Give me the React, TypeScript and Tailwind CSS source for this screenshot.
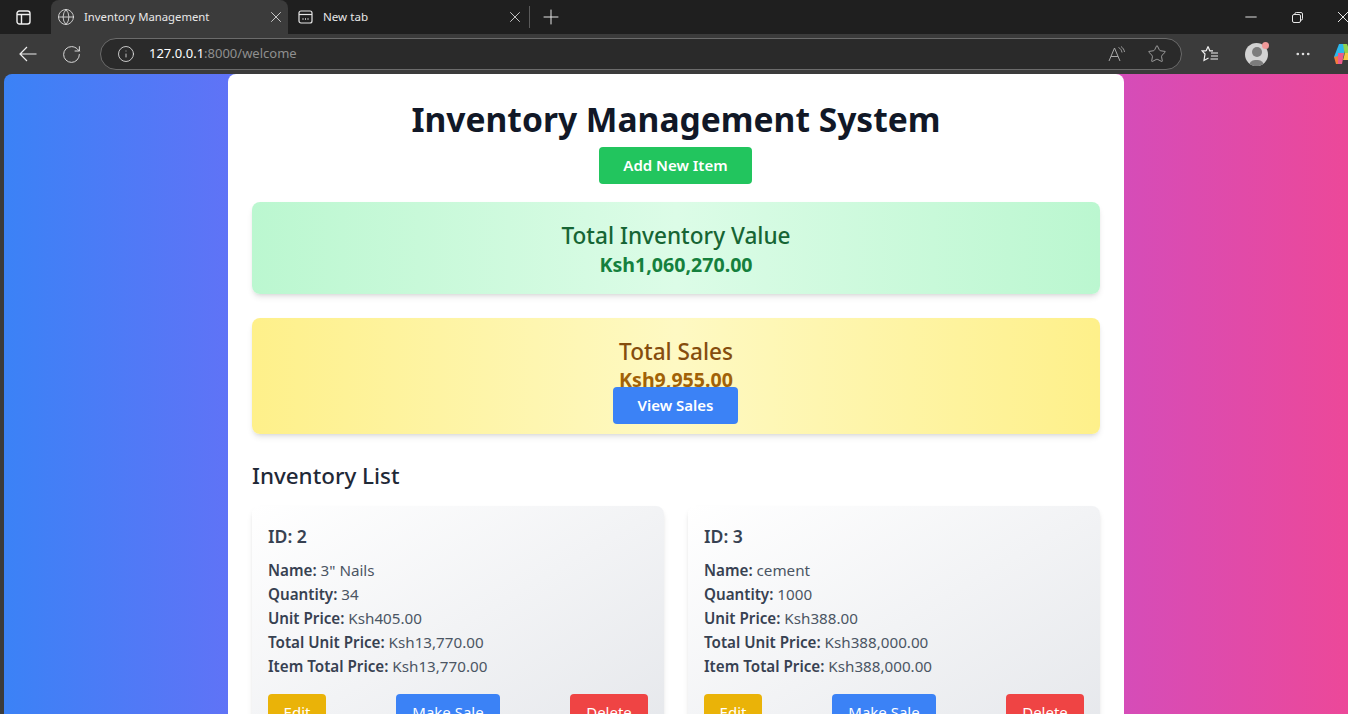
import { Globe, RotateCw, Info, Star, MoreHorizontal, Minus, X, Plus } from 'lucide-react';

const items = [
  { id: 2, name: '3" Nails', quantity: 34, unit: 'Ksh405.00', totalUnit: 'Ksh13,770.00', total: 'Ksh13,770.00' },
  { id: 3, name: 'cement', quantity: 1000, unit: 'Ksh388.00', totalUnit: 'Ksh388,000.00', total: 'Ksh388,000.00' },
];

function BrowserChrome() {
  return (
    <div className="shrink-0 overflow-hidden text-[#e6e6e6]">
      <div className="flex h-[34px] items-end bg-[#1f1f1f]">
        <div className="flex h-[34px] w-[51px] shrink-0 items-center pl-[16px]">
          <svg width="15" height="15" viewBox="0 0 15 15" fill="none" stroke="#f0f0f0" strokeWidth="1.4">
            <rect x="1" y="1" width="13" height="13" rx="2.500" />
            <path d="M1 4.500h13M5.500 4.500V14" />
          </svg>
        </div>
        <div className="flex h-[34px] w-[237px] shrink-0 items-center rounded-t-lg bg-[#3b3b3b] pl-[6px] pr-[3px]">
          <Globe size={18} strokeWidth={1.1} className="shrink-0 text-[#e6e6e6]" />
          <span className="ml-[9px] flex-1 text-[11.3px] text-[#e8e8e8]">Inventory Management</span>
          <X size={18} strokeWidth={1.1} />
        </div>
        <div className="flex h-[34px] w-[241px] shrink-0 items-center pl-[10px] pr-[5px]">
          <svg width="15" height="14" viewBox="0 0 15 14" fill="none" stroke="#e6e6e6" strokeWidth="1.2">
            <rect x="1" y="1" width="13" height="12" rx="2" />
            <path d="M1 4.500h13" />
            <path d="M4.500 9h1M7 9h1M9.500 9h1" strokeWidth="1.400" />
          </svg>
          <span className="ml-[10px] flex-1 text-[11.600px] text-[#e8e8e8]">New tab</span>
          <X size={18} strokeWidth={1.1} />
        </div>
        <div className="mb-[6px] h-[22px] w-px shrink-0 bg-[#5a5a5a]" />
        <div className="ml-[9px] flex h-[34px] shrink-0 items-center">
          <Plus size={24} strokeWidth={1} />
        </div>
        <div className="ml-auto flex h-[34px] shrink-0 items-center">
          <Minus size={18} strokeWidth={1.300} />
          <svg className="ml-[32px]" width="11" height="11" viewBox="0 0 11 11" fill="none" stroke="#e6e6e6" strokeWidth="1">
            <rect x="0.500" y="2.500" width="8" height="8" rx="1.500" />
            <path d="M2.800 2.500V2a1.500 1.500 0 0 1 1.500-1.500H9A1.500 1.500 0 0 1 10.500 2v4.700A1.500 1.500 0 0 1 9 8.200h-.5" />
          </svg>
          <svg className="ml-[35px]" width="10" height="10" viewBox="0 0 10 10" fill="none" stroke="#e6e6e6" strokeWidth="1">
            <path d="M0 0l10 10M10 0 0 10" />
          </svg>
        </div>
      </div>
      <div className="flex h-[40px] items-center bg-[#3b3b3b]">
        <svg className="ml-[19px] shrink-0" width="18" height="16" viewBox="0 0 18 16" fill="none" stroke="#eeeeee" strokeWidth="1.200">
          <path d="M17.500 8H1M8 1 1 8l7 7" />
        </svg>
        <RotateCw size={21} strokeWidth={1.050} className="ml-[24px] shrink-0" />
        <div className="ml-[18px] flex h-[32px] w-[1082px] shrink-0 items-center rounded-full border border-[#6b6b6b] bg-[#2a2a2a] pl-[16px] pr-[14px]">
          <Info size={18} strokeWidth={1.100} />
          <span className="ml-[14px] flex-1 text-[13px]">
            <span className="text-white">127.0.0.1</span>
            <span className="text-[#8f8f8f]">:8000/welcome</span>
          </span>
          <svg width="18" height="16" viewBox="0 0 18 16" fill="none" stroke="#a8a8a8" strokeWidth="1">
            <path d="M1 15 6.500 2 12 15M3 10.500h7" />
            <path d="M10.500 1.500c2 1 3 2.500 3.500 5M13 0.500c2 1.500 3.200 3.200 3.500 5.500" strokeWidth="0.900" />
          </svg>
          <Star size={20} strokeWidth={1} className="ml-[21px] text-[#b0b0b0]" />
        </div>
        <svg className="ml-[19px] shrink-0" width="18" height="18" viewBox="0 0 18 18" fill="none" stroke="#f0f0f0" strokeWidth="1.200">
          <path d="M7 1.500 8.800 5.800 H12 M5.200 5.800 7 1.500M5.200 5.800H1L4 9 3 15.500 7.500 13M4 9" />
          <path d="M10 8h7M10 11h7M9.500 14h7.500" />
        </svg>
        <div className="relative ml-[26px] flex h-[23px] w-[23px] shrink-0 items-end justify-center overflow-hidden rounded-full bg-[#d2d2d2]">
          <div className="absolute left-[6.500px] top-[4px] h-[10px] w-[10px] rounded-full bg-[#7c7c7c]" />
          <div className="h-[6px] w-[15px] rounded-t-full bg-[#7c7c7c]" />
        </div>
        <div className="relative -ml-[6px] -mt-[17px] h-[7px] w-[7px] shrink-0 rounded-full bg-[#f09a9a]" />
        <MoreHorizontal size={18} strokeWidth={1.500} className="ml-[25px] shrink-0" />
        <svg className="ml-[22px] shrink-0" width="18" height="20" viewBox="0 0 18 20">
          <path d="M5 0h7L9 14H4l-4-1Z" fill="#2bb7ec" />
          <path d="M0 13l4-1 1 8H2Z" fill="#f47a3c" />
          <path d="M4 9h6l-2 11H4Z" fill="#ec5a8c" />
          <path d="M9 0h4l5 12h-7Z" fill="#8fd14f" />
          <path d="M11 9h7l-3 7h-6Z" fill="#f5c542" />
        </svg>
      </div>
    </div>
  );
}

function ItemCard({ item }: { item: (typeof items)[number] }) {
  return (
    <div className="rounded-lg bg-[linear-gradient(to_bottom_right,#ffffff,#e5e7eb)] p-4 shadow-md">
      <h3 className="text-[17.600px] leading-7 font-semibold text-[#374151]">ID: {item.id}</h3>
      <div className="mt-[8px] text-[15.200px] leading-6 text-[#4b5563]">
        <p><strong className="font-semibold text-[#374151]">Name:</strong> {item.name}</p>
        <p><strong className="font-semibold text-[#374151]">Quantity:</strong> {item.quantity}</p>
        <p><strong className="font-semibold text-[#374151]">Unit Price:</strong> {item.unit}</p>
        <p><strong className="font-semibold text-[#374151]">Total Unit Price:</strong> {item.totalUnit}</p>
        <p><strong className="font-semibold text-[#374151]">Item Total Price:</strong> {item.total}</p>
      </div>
      <div className="mt-4 flex justify-between text-[15px] text-white">
        <button className="h-[37px] w-[58px] rounded bg-[#eab308]">Edit</button>
        <button className="h-[37px] w-[104px] rounded bg-[#3b82f6]">Make Sale</button>
        <button className="h-[37px] w-[78px] rounded bg-[#ef4444]">Delete</button>
      </div>
    </div>
  );
}

export default function App() {
  return (
    <div className="flex h-[714px] flex-col overflow-hidden bg-[#3b3b3b] font-['Noto_Sans',sans-serif]">
      <BrowserChrome />
      <div className="ml-[4px] flex-1 overflow-hidden rounded-tl-lg bg-[linear-gradient(to_right,#3b82f6,#a855f7,#ec4899)]">
        <div className="mx-auto w-[896px] rounded-lg bg-white p-6">
          <div className="flex flex-col items-center">
            <h1 className="pt-[3px] text-[33.600px] leading-[37px] font-bold text-[#111827]">Inventory Management System</h1>
            <button className="mr-[1px] mt-[9px] h-[37px] w-[153px] rounded bg-[#22c55e] text-[15px] font-semibold text-white">Add New Item</button>
          </div>
          <div className="mt-[18px] rounded-lg bg-[linear-gradient(to_right,#bbf7d0,#dcfce7,#bbf7d0)] p-4 text-center shadow-md">
            <h2 className="pt-[3px] text-[22.600px] leading-[29px] font-medium text-[#166534]">Total Inventory Value</h2>
            <p className="pt-[1px] text-[19.600px] leading-[27px] font-bold text-[#15803d]">Ksh1,060,270.00</p>
          </div>
          <div className="mt-6 flex flex-col items-center rounded-lg bg-[linear-gradient(to_right,#fef08a,#fef9c3,#fef08a)] px-4 pb-2.5 pt-4 shadow-md">
            <h2 className="pt-[3px] text-[22.600px] leading-[29px] font-medium text-[#854d0e]">Total Sales</h2>
            <p className="text-[19.600px] leading-7 font-bold text-[#a16207]">Ksh9,955.00</p>
            <button className="mr-[1px] -mt-[7px] h-[37px] w-[125px] rounded bg-[#3b82f6] text-[15px] font-semibold text-white">View Sales</button>
          </div>
          <h2 className="mt-[26px] text-[22.400px] leading-8 font-medium text-[#1f2937]">Inventory List</h2>
          <div className="mt-[14px] grid grid-cols-2 gap-6">
            {items.map((item) => (
              <ItemCard key={item.id} item={item} />
            ))}
          </div>
        </div>
      </div>
    </div>
  );
}
